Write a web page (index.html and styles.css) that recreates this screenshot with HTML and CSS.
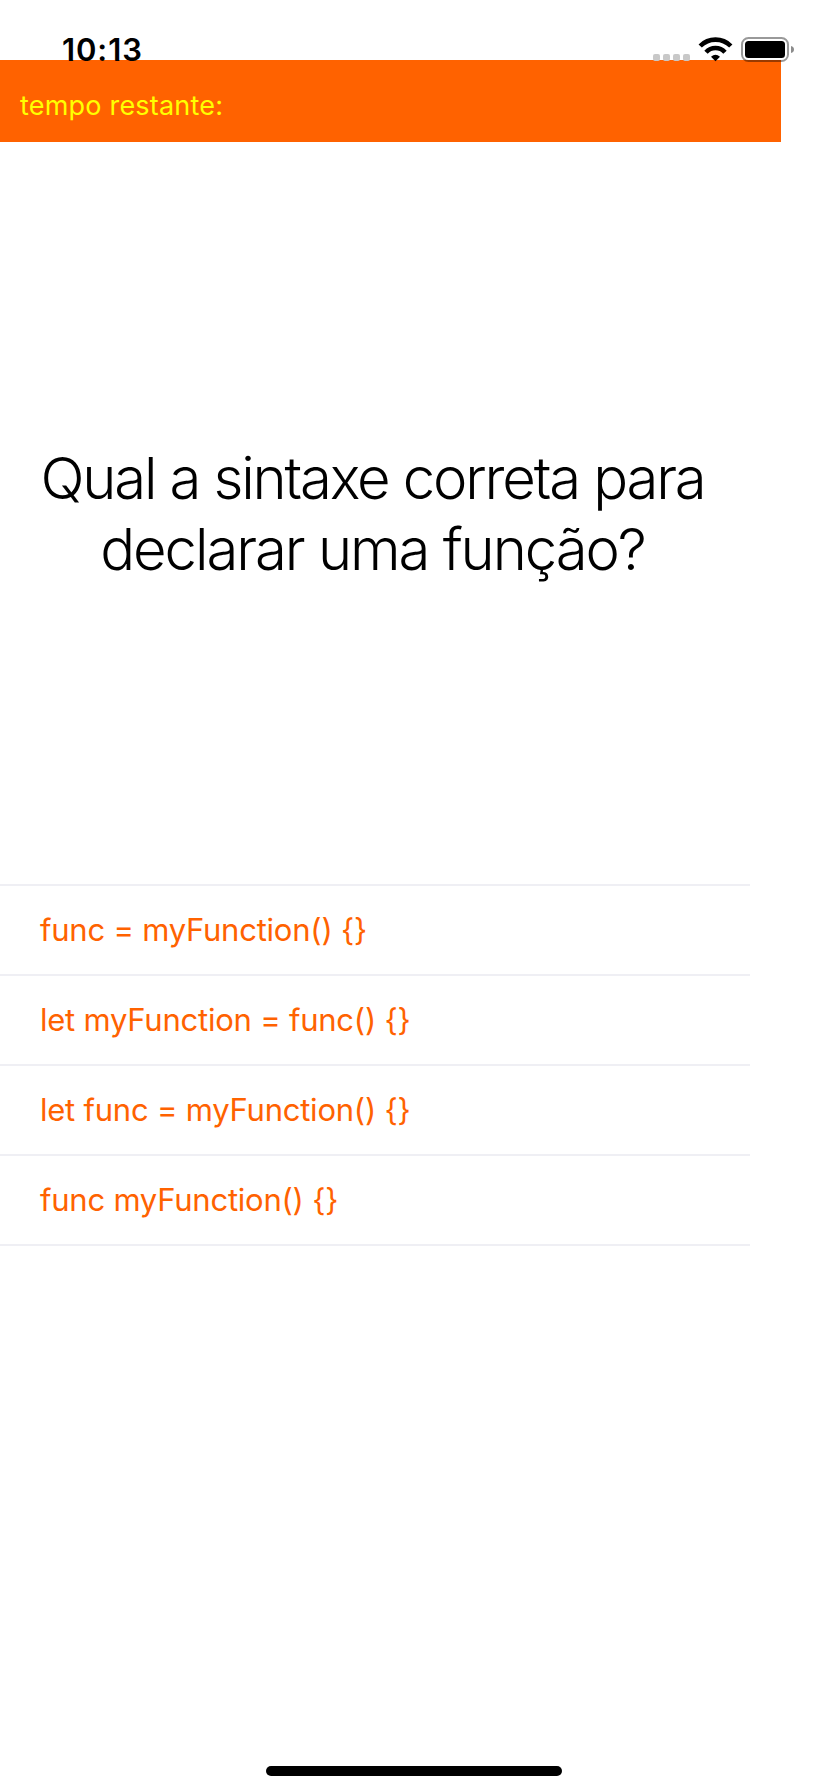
FILE: index.html
```html
<!DOCTYPE html>
<html lang="pt">
<head>
<meta charset="utf-8">
<title>Quiz</title>
<link rel="stylesheet" href="styles.css">
</head>
<body>
<div class="screen">
  <header class="status">
    <span class="clock">10:13</span>
    <svg class="indicators" width="144" height="28" viewBox="0 0 144 28" aria-hidden="true">
      <g fill="#c8c8c8">
        <rect x="1" y="18" width="7" height="7" rx="2"/>
        <rect x="11" y="18" width="7" height="7" rx="2"/>
        <rect x="21" y="18" width="7" height="7" rx="2"/>
        <rect x="31" y="18" width="7" height="7" rx="2"/>
      </g>
      <g fill="none" stroke="#000" stroke-width="4.6">
        <path d="M48.2 10 A21.5 21.5 0 0 1 78.8 10"/>
        <path d="M54 16.2 A13 13 0 0 1 73 16.2"/>
      </g>
      <path d="M63.5 25.2 L59 20.8 Q63.5 16.8 68 20.8 Z"/>
      <rect x="90" y="2" width="46" height="23" rx="6.5" fill="none" stroke="#000" stroke-opacity=".4" stroke-width="2"/>
      <rect x="93" y="5" width="40" height="17" rx="3.5"/>
      <path d="M139 10 Q142 10.8 142 13.5 Q142 16.2 139 17 Z" fill="#000" fill-opacity=".45"/>
    </svg>
  </header>
  <div class="timer"><span class="timer-label">tempo restante:</span></div>
  <main class="question">
    <h1 class="question-text"><span class="line line-first">Qual a sintaxe correta para</span> <span class="line line-second">declarar uma função?</span></h1>
  </main>
  <ul class="answers">
    <li class="answer">func = myFunction() {}</li>
    <li class="answer">let myFunction = func() {}</li>
    <li class="answer">let func = myFunction() {}</li>
    <li class="answer">func myFunction() {}</li>
  </ul>
  <footer class="home"><div class="home-bar"></div></footer>
</div>
</body>
</html>
```
FILE: styles.css
```css
body {
  margin: 0;
  background: #fff;
  font-family: Inter, "Liberation Sans", sans-serif;
}

.screen {
  display: flex;
  flex-direction: column;
  height: 1792px;
  overflow: hidden;
}

.status {
  position: relative;
  z-index: 1;
  display: flex;
  justify-content: space-between;
  align-items: flex-start;
  box-sizing: border-box;
  height: 60px;
  padding: 36px 32px 0 62px;
}

.clock {
  font-size: 31px;
  font-weight: 600;
  line-height: 28px;
  letter-spacing: 0.9px;
}

.indicators {
  display: block;
}

.timer {
  box-sizing: border-box;
  width: 781px;
  height: 82px;
  padding: 30px 20px 0;
  background: #ff6200;
  color: #ff0;
}

.timer-label {
  display: block;
  font-size: 27px;
  line-height: 32px;
  letter-spacing: 0.2px;
}

.question {
  display: flex;
  align-items: center;
  justify-content: center;
  box-sizing: border-box;
  width: 750px;
  height: 742px;
  padding: 2px 5px 0 0;
}

.question-text {
  margin: 0;
  font-size: 58px;
  font-weight: 300;
  line-height: 71px;
  text-align: center;
}

.line {
  display: block;
  white-space: nowrap;
}

.line-first {
  letter-spacing: -2.15px;
}

.line-second {
  letter-spacing: -2.05px;
}

.answers {
  width: 750px;
  margin: 0;
  padding: 0;
  border-top: 2px solid #efeff4;
  list-style: none;
}

.answer {
  padding-left: 40px;
  border-bottom: 2px solid #efeff4;
  color: #ff6200;
  font-size: 31px;
  line-height: 88px;
  letter-spacing: -0.23px;
}

.home {
  display: flex;
  justify-content: center;
  margin-top: auto;
  padding-bottom: 16px;
}

.home-bar {
  width: 296px;
  height: 10px;
  border-radius: 5px;
  background: #000;
}
```
